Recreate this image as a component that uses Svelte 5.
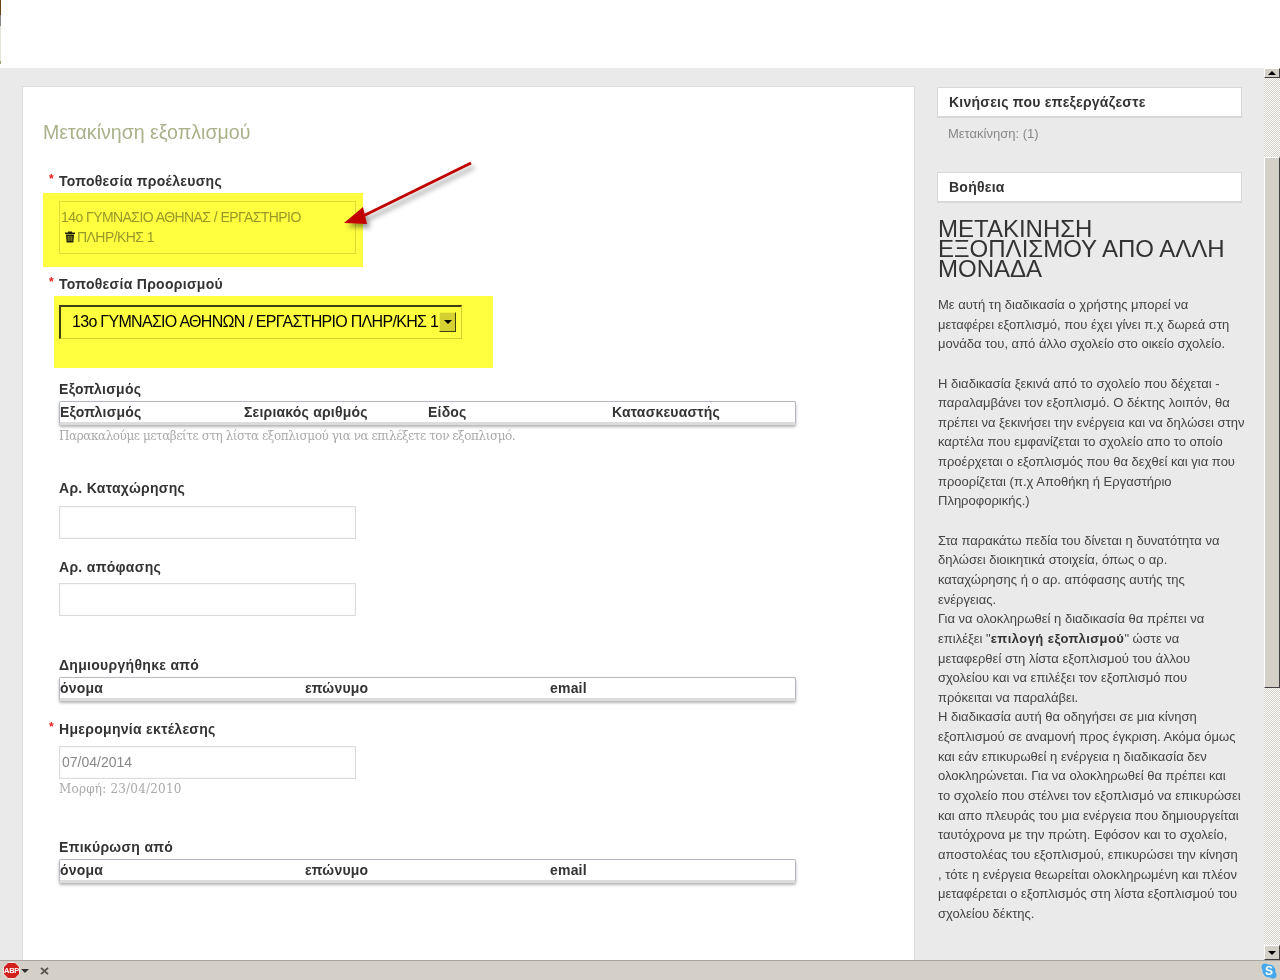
<script>
  const equipmentCols = ['Εξοπλισμός', 'Σειριακός αριθμός', 'Είδος', 'Κατασκευαστής'];
  const personCols = ['όνομα', 'επώνυμο', 'email'];

  const help = [
    'Με αυτή τη διαδικασία ο χρήστης μπορεί να',
    'μεταφέρει εξοπλισμό, που έχει γίνει π.χ δωρεά στη',
    'μονάδα του, από άλλο σχολείο στο οικείο σχολείο.',
    '',
    'Η διαδικασία ξεκινά από το σχολείο που δέχεται -',
    'παραλαμβάνει τον εξοπλισμό. Ο δέκτης λοιπόν, θα',
    'πρέπει να ξεκινήσει την ενέργεια και να δηλώσει στην',
    'καρτέλα που εμφανίζεται το σχολείο απο το οποίο',
    'προέρχεται ο εξοπλισμός που θα δεχθεί και για που',
    'προορίζεται (π.χ Αποθήκη ή Εργαστήριο',
    'Πληροφορικής.)',
    '',
    'Στα παρακάτω πεδία του δίνεται η δυνατότητα να',
    'δηλώσει διοικητικά στοιχεία, όπως ο αρ.',
    'καταχώρησης ή ο αρ. απόφασης αυτής της',
    'ενέργειας.',
    'Για να ολοκληρωθεί η διαδικασία θα πρέπει να',
    'bold',
    'μεταφερθεί στη λίστα εξοπλισμού του άλλου',
    'σχολείου και να επιλέξει τον εξοπλισμό που',
    'πρόκειται να παραλάβει.',
    'Η διαδικασία αυτή θα οδηγήσει σε μια κίνηση',
    'εξοπλισμού σε αναμονή προς έγκριση. Ακόμα όμως',
    'και εάν επικυρωθεί η ενέργεια η διαδικασία δεν',
    'ολοκληρώνεται. Για να ολοκληρωθεί θα πρέπει και',
    'το σχολείο που στέλνει τον εξοπλισμό να επικυρώσει',
    'και απο πλευράς του μια ενέργεια που δημιουργείται',
    'ταυτόχρονα με την πρώτη. Εφόσον και το σχολείο,',
    'αποστολέας του εξοπλισμού, επικυρώσει την κίνηση',
    ', τότε η ενέργεια θεωρείται ολοκληρωμένη και πλέον',
    'μεταφέρεται ο εξοπλισμός στη λίστα εξοπλισμού του',
    'σχολείου δέκτης.',
  ];
</script>

<div class="window">
  <div class="topbar"><div class="sliver"></div></div>

  <div class="middle">
    <main class="card">
      <h1>Μετακίνηση εξοπλισμού</h1>

      <div class="label source-label"><span class="req">*</span>Τοποθεσία προέλευσης</div>
      <div class="source">
        <div>14o ΓΥΜΝΑΣΙΟ ΑΘΗΝΑΣ / ΕΡΓΑΣΤΗΡΙΟ</div>
        <div class="source-second">
          <svg width="12" height="12" viewBox="0 0 12 12">
            <path d="M4 1.5V.6h4v.9h3v1.4H1V1.500z" fill="#222" />
            <path d="M2 3.600h8l-.6 8H2.600z" fill="#222" />
            <path d="M4.200 5v5M6 5v5M7.800 5v5" stroke="#aaa" stroke-width=".8" />
          </svg>
          ΠΛΗΡ/ΚΗΣ 1
        </div>
      </div>

      <div class="label dest-label"><span class="req">*</span>Τοποθεσία Προορισμού</div>
      <div class="select">
        <span class="select-value">13o ΓΥΜΝΑΣΙΟ ΑΘΗΝΩΝ / ΕΡΓΑΣΤΗΡΙΟ ΠΛΗΡ/ΚΗΣ 1</span>
        <span class="select-btn"><i></i></span>
      </div>

      <div class="label equip-label">Εξοπλισμός</div>
      <div class="grid cols4">
        {#each equipmentCols as col}<span>{col}</span>{/each}
      </div>
      <div class="hint">Παρακαλούμε μεταβείτε στη λίστα εξοπλισμού για να επιλέξετε τον εξοπλισμό.</div>

      <div class="label reg-label">Αρ. Καταχώρησης</div>
      <div class="input"></div>

      <div class="label decision-label">Αρ. απόφασης</div>
      <div class="input second"></div>

      <div class="label created-label">Δημιουργήθηκε από</div>
      <div class="grid cols3">
        {#each personCols as col}<span>{col}</span>{/each}
      </div>

      <div class="label date-label"><span class="req">*</span>Ημερομηνία εκτέλεσης</div>
      <div class="input date">07/04/2014</div>
      <div class="hint format">Μορφή: 23/04/2010</div>

      <div class="label approved-label">Επικύρωση από</div>
      <div class="grid cols3">
        {#each personCols as col}<span>{col}</span>{/each}
      </div>

      <!-- annotations painted on the screenshot -->
      <div class="mark mark-source"></div>
      <div class="mark mark-dest"></div>
      <svg class="arrow" width="160" height="90" viewBox="0 0 160 90">
        <defs>
          <filter id="arrow-shadow" x="-20%" y="-20%" width="150%" height="160%">
            <feDropShadow dx="3" dy="4" stdDeviation="2.500" flood-color="#000" flood-opacity=".4" />
          </filter>
        </defs>
        <g filter="url(#arrow-shadow)">
          <path d="M142 6 L28 62" stroke="#c00000" stroke-width="3" fill="none" />
          <path d="M15 66 L34 50 L38 67 Z" fill="#c00000" />
        </g>
      </svg>
    </main>

    <aside class="side">
      <div class="side-title">Κινήσεις που επεξεργάζεστε</div>
      <div class="moves">Μετακίνηση: (1)</div>
      <div class="side-title help-title">Βοήθεια</div>
      <h2>ΜΕΤΑΚΙΝΗΣΗ ΕΞΟΠΛΙΣΜΟΥ ΑΠΟ ΑΛΛΗ ΜΟΝΑΔΑ</h2>
      <div class="help">
        {#each help as line}
          {#if line === 'bold'}
            <div>επιλέξει "<b>επιλογή εξοπλισμού</b>" ώστε να</div>
          {:else if line === ''}
            <div class="blank"></div>
          {:else}
            <div>{line}</div>
          {/if}
        {/each}
      </div>
    </aside>

    <div class="scrollbar">
      <div class="sb-btn sb-up"><i></i></div>
      <div class="sb-track sb-top"></div>
      <div class="sb-thumb"></div>
      <div class="sb-track sb-rest"></div>
      <div class="sb-btn sb-down"><i></i></div>
    </div>
  </div>

  <footer class="status">
    <svg class="abp" width="17" height="17" viewBox="0 0 17 17">
      <path d="M5 .5h7L16.500 5v7L12 16.500H5L.5 12V5z" fill="#d2201c" stroke="#fff" stroke-width=".8" />
      <text x="8.500" y="11.200" text-anchor="middle">ABP</text>
    </svg>
    <span class="abp-caret"></span>
    <svg class="close" width="9" height="8" viewBox="0 0 9 8">
      <path d="M1 .8l7 6.400M8 .8L1 7.200" stroke="#55534d" stroke-width="1.800" />
    </svg>
    <svg class="skype" width="16" height="16" viewBox="0 0 16 16">
      <circle cx="8" cy="8" r="6.500" fill="#45a8ee" />
      <circle cx="4" cy="4" r="3.500" fill="#45a8ee" />
      <circle cx="12" cy="12" r="3.500" fill="#45a8ee" />
      <text x="8" y="12" text-anchor="middle">S</text>
    </svg>
  </footer>
</div>

<style>
  :global(body) {
    margin: 0;
    font-family: "Liberation Sans", Arial, sans-serif;
  }

  .window {
    width: 1280px;
    height: 980px;
    display: flex;
    flex-direction: column;
    overflow: hidden;
    background: #eaeaea;
  }

  .topbar {
    height: 68px;
    flex: none;
    background: #fff;
  }

  .sliver {
    width: 1px;
    height: 64px;
    background: linear-gradient(#6b4218 0 15px, #8a8a8a 15px 26px, #e4e2d8 26px 61px, #9aa870 61px);
  }

  .middle {
    flex: 1;
    min-height: 0;
    display: flex;
  }

  .card {
    position: relative;
    width: 855px;
    margin: 18px 0 0 22px;
    padding: 33px 0 0 36px;
    background: #fff;
    border: solid #dcdcdc;
    border-width: 1px 1px 0;
  }

  h1 {
    margin: 0 0 0 -16px;
    font-size: 19.6px;
    line-height: 24px;
    font-weight: normal;
    color: #a9b18b;
  }

  .label {
    position: relative;
    font-size: 14px;
    line-height: 18px;
    font-weight: bold;
    letter-spacing: .3px;
    color: #333;
  }

  .req {
    position: absolute;
    left: -10px;
    top: -2px;
    color: #e02020;
    font-size: 12px;
    font-weight: bold;
  }

  .source-label { margin-top: 28px; }
  .dest-label { margin-top: 21px; }
  .equip-label { margin-top: 41px; }
  .reg-label { margin-top: 36px; }
  .decision-label { margin-top: 19px; }
  .created-label { margin-top: 40px; }
  .date-label { margin-top: 19px; }
  .approved-label { margin-top: 42px; }

  .source {
    width: 295px;
    height: 51px;
    margin-top: 11px;
    border: 1px solid #dcdcdc;
    font-size: 14px;
    letter-spacing: -.56px;
    line-height: 20px;
    color: #999;
  }

  .source > div:first-child { margin: 5px 0 0 1px; }

  .source-second {
    display: flex;
    align-items: center;
    gap: 1px;
    margin-left: 4px;
  }

  .select {
    display: flex;
    align-items: center;
    box-sizing: border-box;
    width: 403px;
    height: 34px;
    margin-top: 12px;
    padding: 0 5px 2px 11px;
    background: #fff;
    border: 2px solid;
    border-color: #404040 #d4d0c8 #d4d0c8 #404040;
    border-right-width: 1px;
    border-bottom-width: 1px;
    font-size: 16px;
    letter-spacing: -.7px;
    color: #000;
    white-space: nowrap;
  }

  .select-value {
    flex: 1;
  }

  .select-btn {
    display: flex;
    align-items: center;
    justify-content: center;
    box-sizing: border-box;
    width: 17px;
    height: 20px;
    background: #d4d0c8;
    border: 1px solid;
    border-color: #f0f0f0 #404040 #404040 #f0f0f0;
  }

  .select-btn i,
  .sb-btn i {
    width: 0;
    height: 0;
    border: 4px solid transparent;
    border-top-color: #000;
    border-bottom-width: 0;
  }

  .grid {
    display: grid;
    box-sizing: border-box;
    width: 737px;
    height: 24px;
    margin-top: 3px;
    background: #fff;
    border: 1px solid #b4b8c0;
    border-bottom: 3px solid #dcdcdc;
    border-radius: 2px;
    box-shadow: 0 2px 3px rgba(0, 0, 0, .3);
    font-size: 14px;
    font-weight: bold;
    letter-spacing: .2px;
    line-height: 20px;
    color: #333;
  }

  .cols4 { grid-template-columns: repeat(4, 184px); }
  .cols3 { grid-template-columns: repeat(3, 245px); }

  .hint {
    margin-top: 4px;
    font-family: "DejaVu Serif", serif;
    font-size: 12px;
    letter-spacing: -.45px;
    line-height: 14px;
    color: #aaa;
  }

  .format {
    margin-top: 3px;
    letter-spacing: .2px;
  }

  .input {
    box-sizing: border-box;
    width: 297px;
    height: 33px;
    margin-top: 9px;
    border: 1px solid #dcdcdc;
    box-shadow: inset 0 0 2px #e8e8e8;
  }

  .second { margin-top: 7px; }

  .date {
    margin-top: 8px;
    padding-left: 2px;
    font-size: 14px;
    line-height: 30px;
    color: #888;
  }

  .mark {
    position: absolute;
    background: #ffff40;
    mix-blend-mode: multiply;
  }

  .mark-source {
    left: 20px;
    top: 106px;
    width: 320px;
    height: 74px;
  }

  .mark-dest {
    left: 31px;
    top: 209px;
    width: 439px;
    height: 72px;
  }

  .arrow {
    position: absolute;
    left: 306px;
    top: 70px;
  }

  .side {
    width: 305px;
    margin: 19px 0 0 22px;
    color: #444;
  }

  .side-title {
    box-sizing: border-box;
    height: 31px;
    padding-left: 11px;
    background: #fff;
    border: 1px solid #d8d8d8;
    border-bottom-width: 2px;
    font-size: 14px;
    font-weight: bold;
    letter-spacing: .25px;
    line-height: 28px;
    color: #333;
  }

  .moves {
    margin: 8px 0 0 11px;
    font-size: 13px;
    line-height: 15px;
    color: #888;
  }

  .help-title { margin-top: 31px; }

  h2 {
    margin: 16px 0 0 1px;
    font-size: 24px;
    font-weight: normal;
    line-height: 20px;
    color: #333;
  }

  .help {
    margin: 16px 0 0 1px;
    font-size: 13px;
    line-height: 19.64px;
    white-space: nowrap;
  }

  .blank { height: 19.64px; }

  .help b {
    color: #333;
    letter-spacing: .45px;
  }

  .scrollbar {
    width: 16px;
    margin-left: 22px;
    display: flex;
    flex-direction: column;
  }

  .sb-btn {
    display: flex;
    align-items: center;
    justify-content: center;
    box-sizing: border-box;
    width: 16px;
    background: #d4d0c8;
    border: 1px solid;
    border-color: #fff #404040 #404040 #fff;
  }

  .sb-up { height: 10px; }
  .sb-down { height: 15px; }

  .sb-up i {
    border-top-width: 0;
    border-top-color: transparent;
    border-bottom-width: 4px;
    border-bottom-color: #000;
  }

  .sb-track {
    background: repeating-conic-gradient(#d4d0c8 0 25%, #fff 0 50%) 0 0 / 2px 2px;
  }

  .sb-top { height: 79px; }
  .sb-rest { flex: 1; }

  .sb-thumb {
    box-sizing: border-box;
    height: 531px;
    background: #d4d0c8;
    border: 1px solid;
    border-color: #fff #404040 #404040 #fff;
  }

  .status {
    height: 20px;
    flex: none;
    display: flex;
    align-items: center;
    box-sizing: border-box;
    padding-left: 3px;
    background: #d4d0c8;
    border-top: 1px solid #a8a59e;
  }

  .abp text {
    font-family: "Liberation Sans", sans-serif;
    font-size: 7.5px;
    font-weight: bold;
    letter-spacing: -.3px;
    fill: #fff;
  }

  .abp-caret {
    width: 0;
    height: 0;
    margin-left: 1px;
    border: 4px solid transparent;
    border-top-color: #333;
    border-bottom-width: 0;
  }

  .close { margin-left: 11px; }

  .skype {
    margin-left: auto;
    margin-right: 3px;
  }

  .skype text {
    font-family: "Liberation Sans", sans-serif;
    font-size: 12px;
    font-weight: bold;
    fill: #fff;
  }
</style>
